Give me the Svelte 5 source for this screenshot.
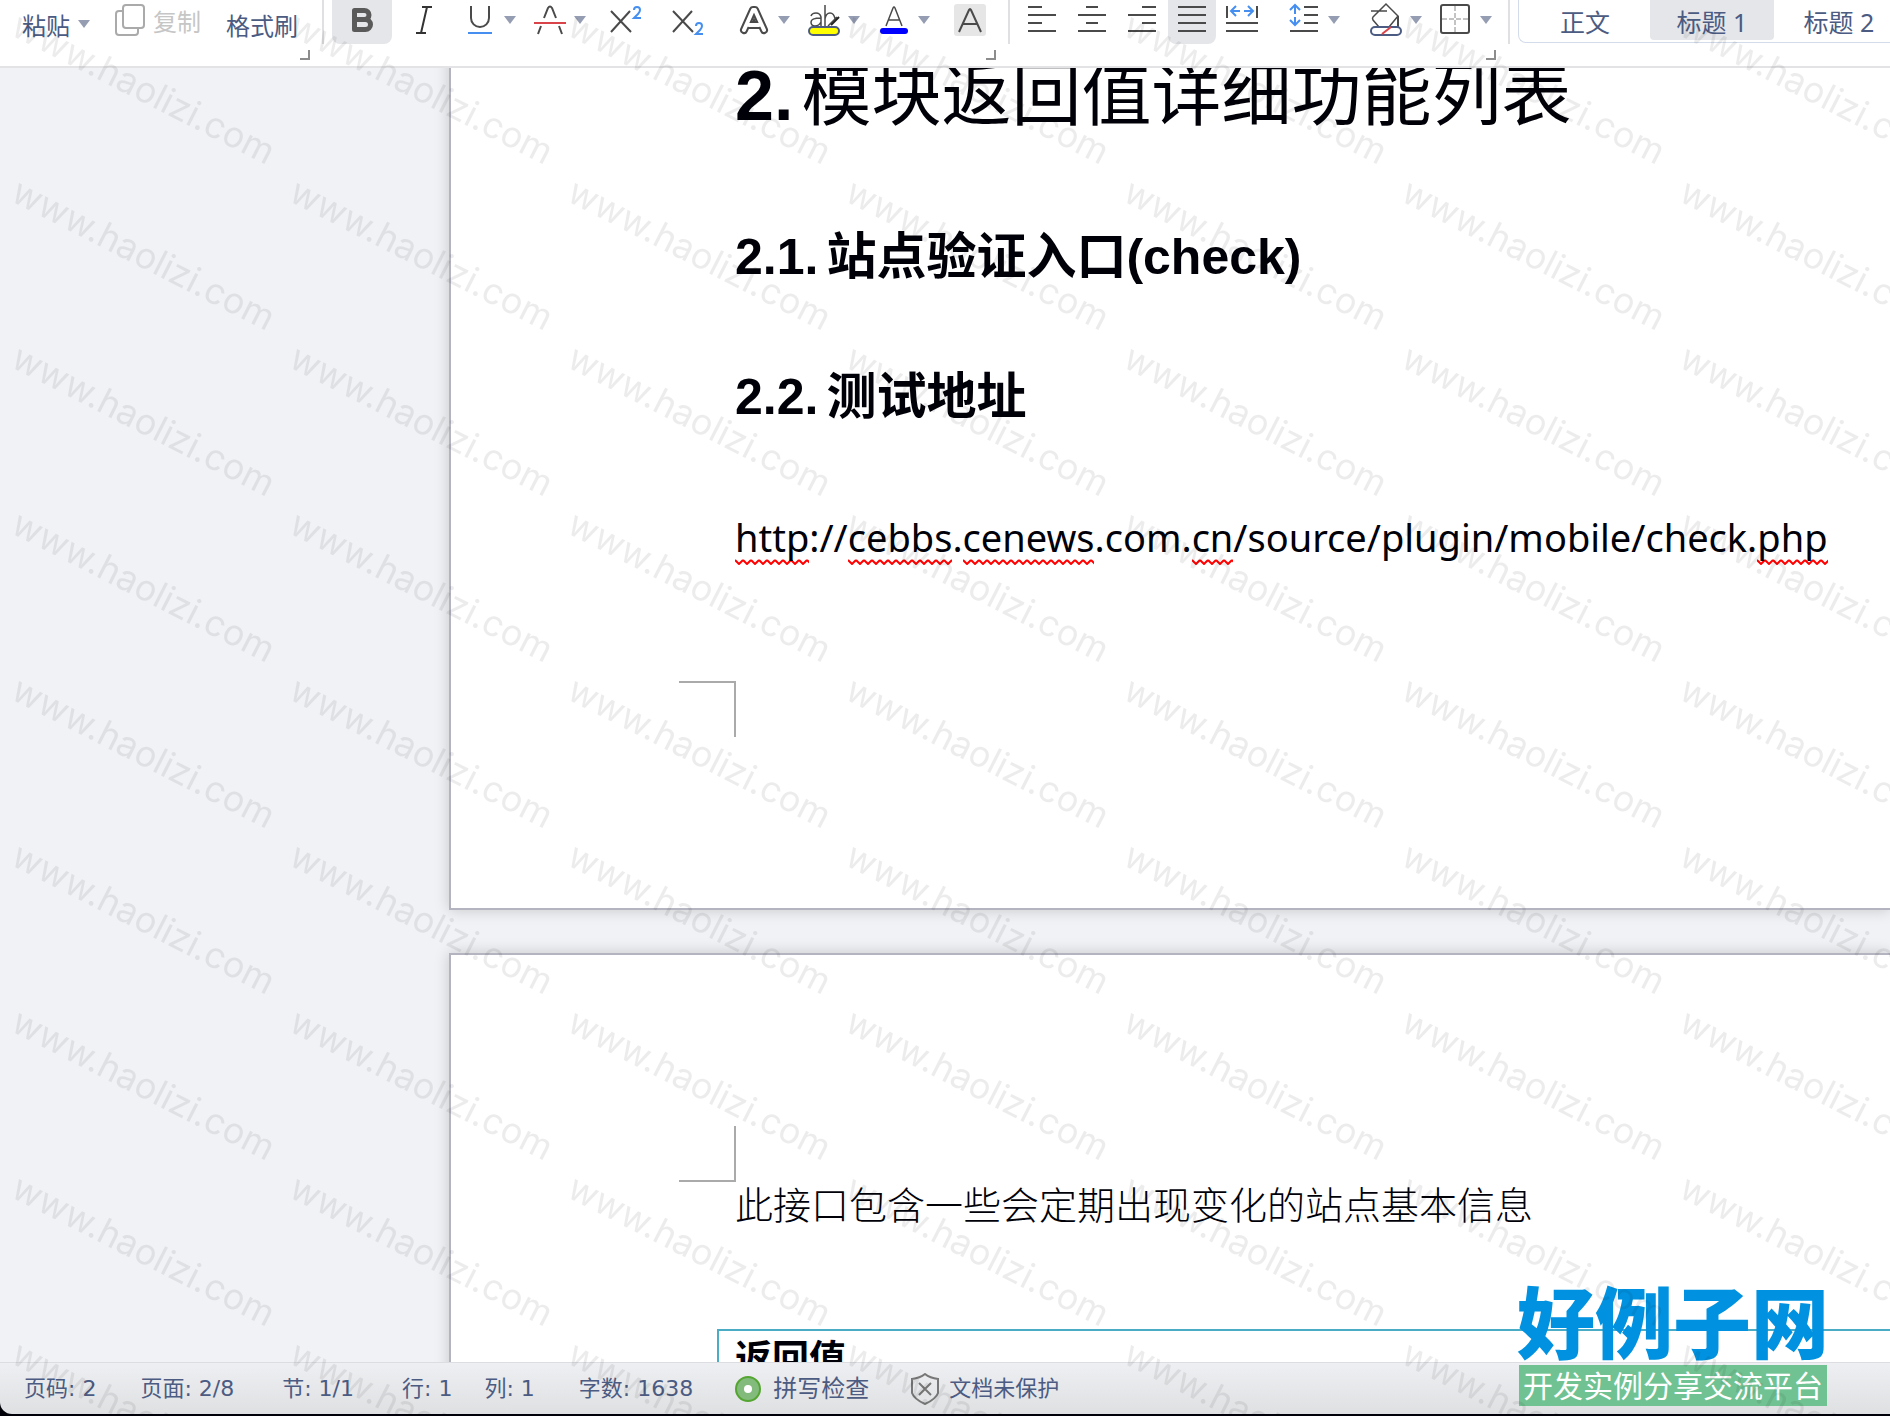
<script>
  const styles = [
    { name: '正文', active: false },
    { name: '标题 1', active: true },
    { name: '标题 2', active: false }
  ];
  const url = [
    { text: 'http', flagged: true },
    { text: '://', flagged: false },
    { text: 'cebbs', flagged: true },
    { text: '.', flagged: false },
    { text: 'cenews', flagged: true },
    { text: '.com.', flagged: false },
    { text: 'cn', flagged: true },
    { text: '/source/plugin/mobile/check.', flagged: false },
    { text: 'php', flagged: true }
  ];
</script>

{#snippet caret()}
  <svg class="caret" viewBox="0 0 12 44" aria-hidden="true"><path d="M0 16h12l-6 8z" /></svg>
{/snippet}

<div class="app">
  <header class="toolbar" role="toolbar" aria-label="格式">
    <div class="group clipboard">
      <button class="labelled low">粘贴{@render caret()}</button>
      <button class="labelled" disabled>
        <svg class="copy" viewBox="0 0 30 44" aria-hidden="true">
          <path d="M7 11H4a3 3 0 0 0-3 3v18a3 3 0 0 0 3 3h16a3 3 0 0 0 3-3v-3" />
          <rect x="8" y="5" width="21" height="23" rx="3" />
        </svg>
        复制
      </button>
      <button class="labelled low">格式刷</button>
      <button class="launcher" aria-label="剪贴板选项"></button>
    </div>
    <i class="sep"></i>
    <div class="group font">
      <button class="on bold" aria-label="加粗">
        <svg class="wide" viewBox="0 0 60 44"><path d="M22.500 10.500V29.500H33.500a5 5 0 0 0 0-10H22.500H32.500a4.500 4.500 0 0 0 0-9z" stroke="#5a5a5a" stroke-width="5" stroke-linejoin="round" /></svg>
      </button>
      <button class="g16" aria-label="斜体">
        <svg viewBox="0 0 32 44"><path d="M14 7h10M8 33h10M19 7l-6 26" stroke="#333" /></svg>
      </button>
      <button class="g24" aria-label="下划线">
        <svg viewBox="0 0 32 44"><path d="M7 6v12a9 9 0 0 0 18 0V6" /><path class="blue" d="M4 33h24" /></svg>
        {@render caret()}
      </button>
      <button class="g18" aria-label="删除线">
        <svg viewBox="0 0 32 44"><path d="M10 18l4-10q2-3 4 0l4 10M4 34l3-8M28 34l-3-8" /><path class="red" d="M0 23h32" /></svg>
        {@render caret()}
      </button>
      <button class="g24" aria-label="上标">
        <svg viewBox="0 0 32 44"><path d="M1 11l20 21M20 11L1 32" /><path class="blue" d="M24 10q0-3 3-3t3 3q0 2-2 4l-4 4h7" /></svg>
      </button>
      <button class="g30" aria-label="下标">
        <svg viewBox="0 0 32 44"><path d="M1 11l20 21M20 11L1 32" /><path class="blue" d="M24 26q0-3 3-3t3 3q0 2-2 4l-4 4h7" /></svg>
      </button>
      <button class="g34" aria-label="文字效果">
        <svg viewBox="0 0 32 44">
          <path d="M6 30L15 10h2l9 20M11 25h10" stroke-width="8" stroke-linejoin="round" stroke-linecap="round" />
          <path d="M6 30L15 10h2l9 20M11 25h10" stroke="#fff" stroke-width="4" stroke-linejoin="round" stroke-linecap="round" />
          <path d="M16 17l-2 5h4z" fill="#4a4a4a" stroke="none" />
        </svg>
        {@render caret()}
      </button>
      <button class="g18" aria-label="突出显示">
        <svg viewBox="0 0 32 44">
          <path d="M3 16q1-3 5-3t5 4v9M13 18q-10 0-10 4t4 4q4 0 6-4M17 5v21M17 19q1-6 5-6t5 6M29 17l-9 9" stroke-width="1.500" />
          <path d="M31 17l-8 8" stroke="#222" stroke-width="2" />
          <rect x="1" y="27" width="30" height="8" rx="4" fill="#ff0" stroke="#4b5b82" />
        </svg>
        {@render caret()}
      </button>
      <button class="g18" aria-label="字体颜色">
        <svg viewBox="0 0 32 44"><path d="M8 26l7-18q1-2 2 0l7 18M10 20h12" stroke-width="1.500" /><rect x="2" y="28" width="28" height="6" rx="3" fill="#00f" stroke="none" /></svg>
        {@render caret()}
      </button>
      <button class="g24" aria-label="字符底纹">
        <svg viewBox="0 0 32 44"><rect y="4" width="32" height="32" rx="3" fill="#e6e6e6" stroke="none" /><path d="M5 32l10-22q1-2 2 0l10 22M8 24h16" /></svg>
      </button>
      <button class="launcher" aria-label="字体选项"></button>
    </div>
    <i class="sep"></i>
    <div class="group para">
      <button aria-label="左对齐"><svg viewBox="0 0 32 44"><path d="M2 7h14M2 15h28M2 23h14M2 31h28" /></svg></button>
      <button class="g18" aria-label="居中"><svg viewBox="0 0 32 44"><path d="M10 7h12M2 15h28M10 23h12M2 31h28" /></svg></button>
      <button class="g18" aria-label="右对齐"><svg viewBox="0 0 32 44"><path d="M16 7h14M2 15h28M16 23h14M2 31h28" /></svg></button>
      <button class="g10 on justify" aria-label="两端对齐"><svg viewBox="0 0 32 44"><path d="M2 7h28M2 15h28M2 23h28M2 31h28" /></svg></button>
      <button class="g10" aria-label="分散对齐">
        <svg viewBox="0 0 32 44"><path d="M1 6v12M31 6v12M0 23h32M0 31h32" /><path class="blue" d="M14 11H6M10 6l-5 5 5 5M18 11h8M22 6l5 5-5 5" /></svg>
      </button>
      <button class="g30" aria-label="行距">
        <svg viewBox="0 0 32 44"><path d="M16 7h14M16 15h14M16 23h14M2 31h28" /><path class="blue" d="M7 14V5M2 10l5-5 5 5M7 17v8M2 20l5 5 5-5" /></svg>
        {@render caret()}
      </button>
      <button class="g30" aria-label="底纹颜色">
        <svg viewBox="0 0 32 44">
          <path d="M9 27l-6-7q-1-2 0-3L16 4l12 12-9 11M1 11h16" stroke-width="1.500" />
          <path d="M28 16v11" />
          <rect x="1" y="27" width="30" height="8" rx="4" fill="#fff" stroke="#4b5b82" />
          <path class="red" d="M12 34l9-7" />
        </svg>
        {@render caret()}
      </button>
      <button class="g18" aria-label="边框">
        <svg viewBox="0 0 32 44"><rect x="1" y="5" width="28" height="28" rx="2" /><path d="M15 6v26M2 19h26" stroke="#888" stroke-width="1" stroke-dasharray="5 2" /></svg>
        {@render caret()}
      </button>
      <button class="launcher" aria-label="段落选项"></button>
    </div>
    <i class="sep"></i>
    <div class="gallery">
      {#each styles as s}
        <button class:active={s.active} aria-pressed={s.active}>{s.name}</button>
      {/each}
    </div>
  </header>

  <main class="canvas">
    <article class="page first">
      <h1><span class="num">2.</span>模块返回值详细功能列表</h1>
      <h2><span class="num">2.1.</span>站点验证入口(check)</h2>
      <h2><span class="num">2.2.</span>测试地址</h2>
      <p class="url">{#each url as part}<span class:flagged={part.flagged}>{part.text}</span>{/each}</p>
      <div class="crop end"></div>
    </article>
    <article class="page second">
      <div class="crop start"></div>
      <p class="body">此接口包含一些会定期出现变化的站点基本信息</p>
      <table><tbody><tr><th scope="col">返回值</th></tr></tbody></table>
    </article>
  </main>

  <footer class="status">
    <span class="tight">页码: 2</span>
    <span>页面: 2/8</span>
    <span>节: 1/1</span>
    <span class="row">行: 1</span>
    <span class="tight">列: 1</span>
    <span class="last">字数: 1638</span>
    <button class="spell last">
      <svg viewBox="0 0 26 26" aria-hidden="true"><circle cx="13" cy="13" r="12" fill="#82bb7c" stroke="#55a532" stroke-width="2" /><circle cx="13" cy="13" r="4" fill="#fff" /></svg>
      拼写检查
    </button>
    <button class="protect">
      <svg viewBox="0 0 28 32" aria-hidden="true"><path d="M14 1q5 4 13 5v14q-2 6-13 11Q3 26 1 20V6q8-1 13-5zM8 10l12 12M20 10L8 22" fill="none" stroke="#777" stroke-width="2" /></svg>
      文档未保护
    </button>
  </footer>

  <div class="brand">
    <strong>好例子网</strong>
    <span>开发实例分享交流平台</span>
  </div>

  <svg class="watermark" aria-hidden="true">
    <defs>
      <pattern id="wm" width="278" height="166" patternUnits="userSpaceOnUse">
        <text transform="translate(9 34) rotate(27)">www.haolizi.com</text>
      </pattern>
    </defs>
    <rect width="100%" height="100%" fill="url(#wm)" />
  </svg>
</div>

<style>
  :global(body) {
    margin: 0;
    background: #000008;
  }
  .app {
    position: relative;
    display: flex;
    flex-direction: column;
    height: 100vh;
    overflow: hidden;
    font-family: 'Noto Sans', 'Noto Sans CJK SC', sans-serif;
    color: #4b5b82;
  }
  button {
    display: flex;
    flex: none;
    align-items: flex-start;
    gap: 8px;
    padding: 0;
    border: 0;
    background: none;
    color: inherit;
    font: inherit;
    white-space: nowrap;
  }
  .toolbar {
    display: flex;
    flex: none;
    box-sizing: border-box;
    height: 68px;
    border-bottom: 2px solid #e3e3e5;
    background: #fff;
    overflow: hidden;
  }
  .toolbar svg {
    display: block;
    flex: none;
    width: 32px;
    height: 44px;
    fill: none;
    stroke: #4a4a4a;
    stroke-width: 2;
  }
  .toolbar svg.wide { width: 60px; }
  .toolbar svg.copy { width: 30px; stroke: #aaa; }
  .toolbar svg.caret {
    width: 12px;
    fill: #959db3;
    stroke: none;
  }
  .toolbar .low svg.caret { height: 52px; }
  .toolbar .blue { stroke: #468ff0; }
  .toolbar .red { stroke: #d9434a; }
  .group {
    position: relative;
    display: flex;
    flex: none;
    padding-right: 10px;
  }
  .clipboard {
    gap: 25px;
    padding: 0 12px 0 22px;
  }
  .para { padding: 0 4px 0 8px; }
  .labelled {
    height: 44px;
    font-size: 24px;
    line-height: 44px;
  }
  .low { line-height: 52px; }
  .labelled:disabled { color: #c6c6c6; }
  .on {
    height: 44px;
    border-radius: 0 0 8px 8px;
    background: #e5e6ea;
  }
  .justify { padding: 0 8px; }
  .g10 { margin-left: 10px; }
  .g16 { margin-left: 16px; }
  .g18 { margin-left: 18px; }
  .g24 { margin-left: 24px; }
  .g30 { margin-left: 30px; }
  .g34 { margin-left: 34px; }
  .launcher {
    position: absolute;
    right: 0;
    top: 50px;
    width: 10px;
    height: 10px;
    border-right: 2px solid #8c8c8c;
    border-bottom: 2px solid #8c8c8c;
  }
  .sep {
    flex: none;
    width: 2px;
    height: 44px;
    margin: 0 8px 0 12px;
    background: #e0e0e2;
  }
  .gallery {
    display: flex;
    flex: 1;
    gap: 3px;
    box-sizing: border-box;
    height: 43px;
    padding-left: 4px;
    border: solid #d3dcea;
    border-width: 0 0 1px 1px;
    border-radius: 0 0 0 8px;
    overflow: hidden;
  }
  .gallery button {
    justify-content: center;
    width: 124px;
    height: 40px;
    border-radius: 0 0 4px 4px;
    font-size: 25px;
    line-height: 44px;
  }
  .gallery .active { background: #e5e6ea; }

  .canvas {
    flex: 1;
    min-height: 0;
    padding-left: 449px;
    background: #f1f2f5;
    overflow: hidden;
  }
  .page {
    box-sizing: border-box;
    padding-left: 284px;
    border: 2px solid #b4b4c0;
    border-right: 0;
    background: #fff;
    box-shadow: 0 0 14px rgba(0, 0, 0, 0.18);
    color: #000008;
    white-space: nowrap;
  }
  .first {
    height: 882px;
    margin: -40px 0 43px;
    padding-top: 16px;
  }
  .second { height: 600px; }
  h1, h2, p { margin: 0; }
  h1 {
    margin-bottom: 71px;
    font: 400 70px/100px 'Liberation Sans', 'Noto Sans CJK SC', sans-serif;
  }
  h2 {
    margin-bottom: 60px;
    font: 700 50px/80px 'Liberation Sans', 'Noto Sans CJK SC', sans-serif;
  }
  .num {
    margin-right: 8px;
    font-weight: 700;
  }
  .url {
    font: 400 38px/80px 'Noto Sans', sans-serif;
  }
  .flagged {
    padding-bottom: 2px;
    background: url("data:image/svg+xml,%3Csvg xmlns='http://www.w3.org/2000/svg' width='8' height='6'%3E%3Cpath d='M0 1l4 4 4-4' fill='none' stroke='red' stroke-width='2'/%3E%3C/svg%3E") left bottom repeat-x;
  }
  .crop {
    box-sizing: border-box;
    width: 57px;
    height: 56px;
    margin-left: -56px;
    border-right: 2px solid #aaa;
  }
  .end { margin-top: 104px; border-top: 2px solid #aaa; }
  .start { margin-top: 171px; border-bottom: 2px solid #aaa; }
  .body {
    font-size: 38px;
    font-weight: 300;
    line-height: 44px;
  }
  table {
    width: calc(100% + 40px);
    margin: 103px 0 0 -18px;
    border-collapse: separate;
    border-spacing: 0;
    border: 2px solid #4bacc6;
  }
  th {
    padding: 0 16px;
    font-size: 37px;
    line-height: 54px;
    text-align: left;
  }

  .status {
    display: flex;
    flex: none;
    align-items: center;
    box-sizing: border-box;
    height: 52px;
    margin-bottom: 2px;
    padding-left: 24px;
    border-top: 1px solid #dcdde1;
    border-bottom-left-radius: 12px;
    background: linear-gradient(#eeeff2, #dfe0e2);
    font-family: 'DejaVu Sans', 'Noto Sans CJK SC', sans-serif;
    font-size: 22px;
    line-height: 32px;
    white-space: nowrap;
  }
  .status span, .status button { margin-right: 48px; }
  .status button { align-items: center; }
  .status .row { margin-right: 32px; }
  .status .tight { margin-right: 44px; }
  .status .last { margin-right: 42px; }
  .spell { gap: 12px; font-size: 24px; }
  .protect { gap: 10px; font-size: 22px; }
  .spell svg { width: 26px; height: 26px; }
  .protect svg { width: 28px; height: 32px; }

  .brand {
    position: absolute;
    right: 63px;
    bottom: 10px;
    display: flex;
    flex-direction: column;
    align-items: center;
    width: 308px;
    white-space: nowrap;
  }
  .brand strong {
    color: #0092e0;
    font-size: 78px;
    font-weight: 900;
    line-height: 84px;
  }
  .brand span {
    width: 308px;
    background: #70c292;
    color: #fff;
    font-size: 30px;
    line-height: 41px;
    text-align: center;
  }
  .watermark {
    position: absolute;
    inset: 0;
    width: 100%;
    height: 100%;
    pointer-events: none;
  }
  .watermark text {
    fill: rgba(0, 0, 0, 0.075);
    font: 400 36px Inter, sans-serif;
  }
</style>
